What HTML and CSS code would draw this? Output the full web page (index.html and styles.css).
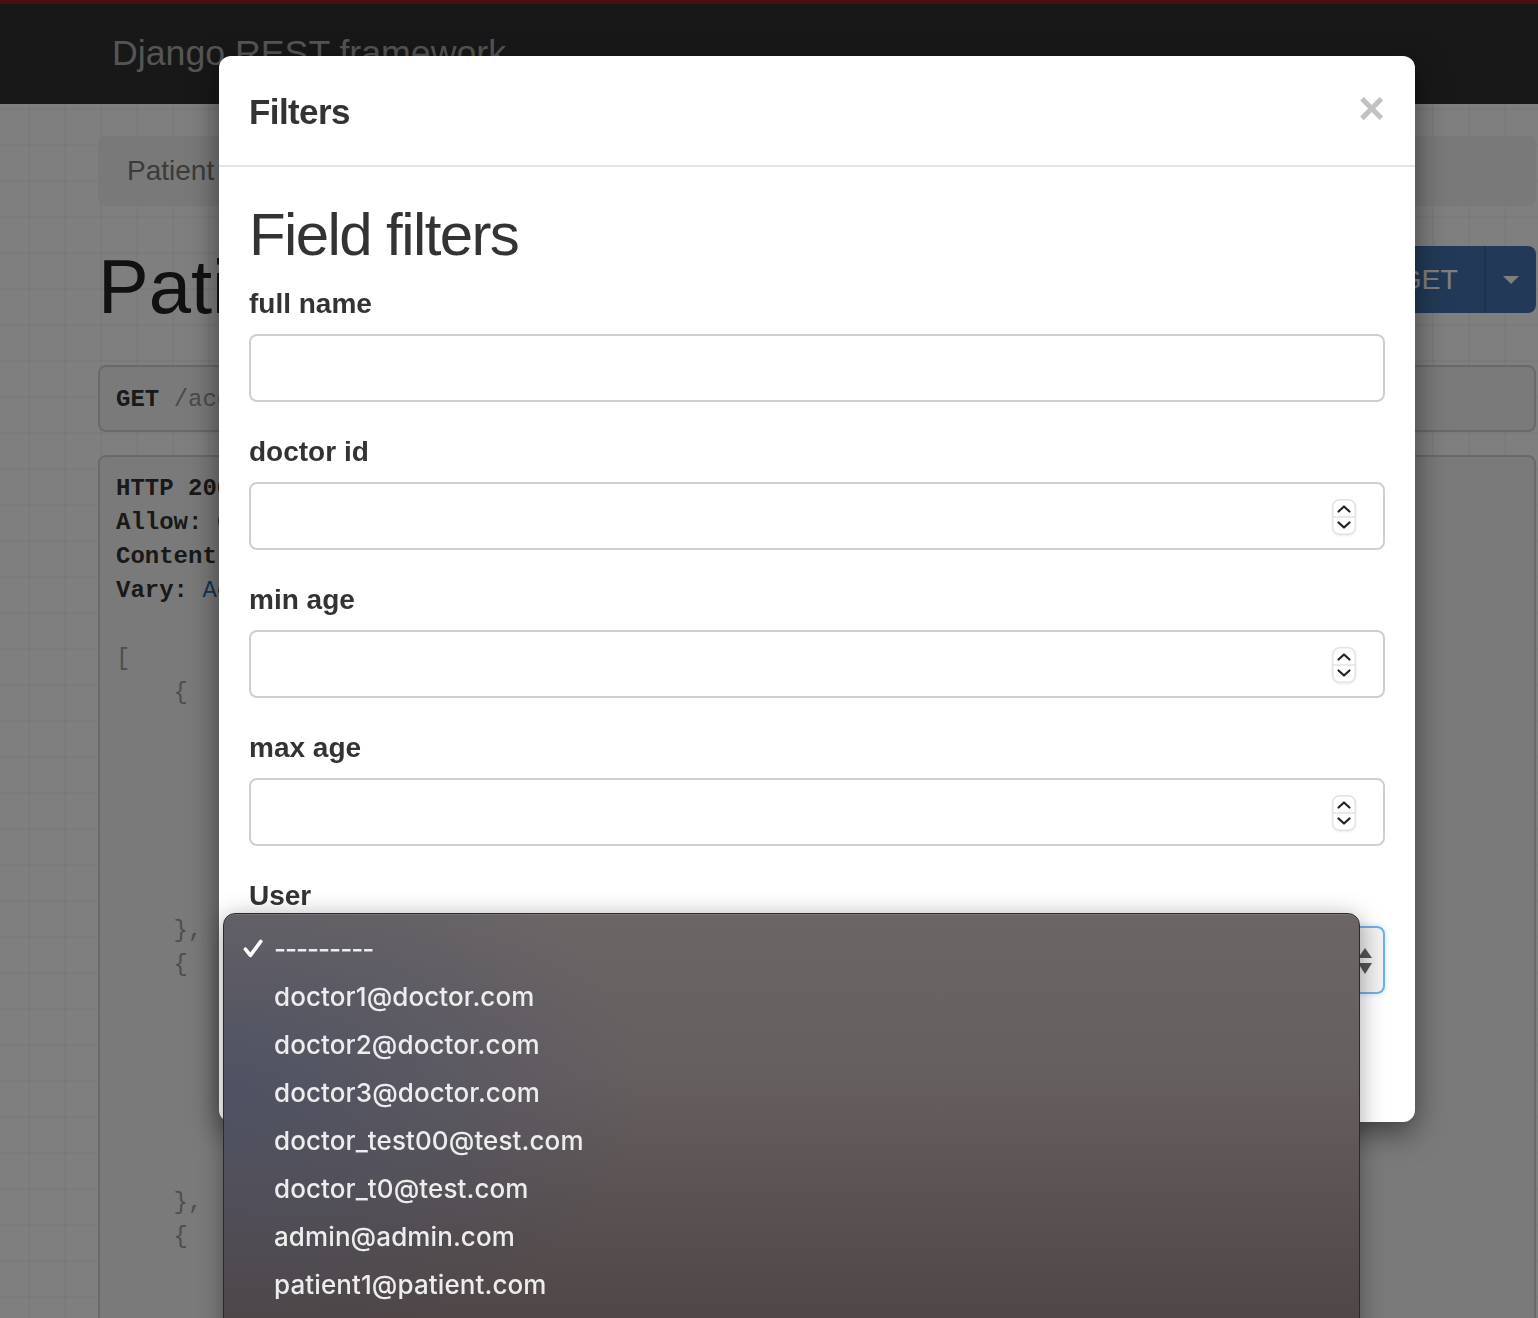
FILE: index.html
```html
<!DOCTYPE html>
<html lang="en">
<head>
<meta charset="utf-8">
<title>Patient List – Django REST framework</title>
<link rel="stylesheet" href="styles.css">
</head>
<body>
<div class="page">
  <header class="navbar"><span class="brand">Django REST framework</span></header>
  <div class="container">
    <div class="breadcrumb">Patient List</div>
    <div class="title-row">
      <h1>Patient List</h1>
      <div class="btn-group">
        <span class="btn-get">GET</span>
        <span class="btn-caret"><span class="caret"></span></span>
      </div>
    </div>
    <pre class="request"><b>GET</b> <span class="url">/accounts/patients/</span></pre>
    <pre class="response"><b>HTTP 200 OK</b>
<b>Allow:</b> <span class="lit">GET, POST, HEAD, OPTIONS</span>
<b>Content-Type:</b> <span class="lit">application/json</span>
<b>Vary:</b> <span class="lit">Accept</span>

<span class="pun">[</span>
    <span class="pun">{</span>
        <span class="str">"id"</span><span class="pun">: </span><span class="lit">1</span><span class="pun">,</span>
        <span class="str">"full_name"</span><span class="pun">: </span><span class="str">"John Smith"</span><span class="pun">,</span>
        <span class="str">"age"</span><span class="pun">: </span><span class="lit">34</span><span class="pun">,</span>
        <span class="str">"doctor"</span><span class="pun">: </span><span class="lit">1</span><span class="pun">,</span>
        <span class="str">"user"</span><span class="pun">: </span><span class="lit">7</span><span class="pun">,</span>
        <span class="str">"created_at"</span><span class="pun">: </span><span class="str">"2020-05-12T10:21:00Z"</span>
    <span class="pun">},</span>
    <span class="pun">{</span>
        <span class="str">"id"</span><span class="pun">: </span><span class="lit">2</span><span class="pun">,</span>
        <span class="str">"full_name"</span><span class="pun">: </span><span class="str">"Mary Jones"</span><span class="pun">,</span>
        <span class="str">"age"</span><span class="pun">: </span><span class="lit">52</span><span class="pun">,</span>
        <span class="str">"doctor"</span><span class="pun">: </span><span class="lit">2</span><span class="pun">,</span>
        <span class="str">"user"</span><span class="pun">: </span><span class="lit">8</span><span class="pun">,</span>
        <span class="str">"created_at"</span><span class="pun">: </span><span class="str">"2020-05-13T09:02:00Z"</span>
    <span class="pun">},</span>
    <span class="pun">{</span>
        <span class="str">"id"</span><span class="pun">: </span><span class="lit">3</span><span class="pun">,</span>
</pre>
  </div>
</div>

<div class="backdrop"></div>

<div class="modal">
  <div class="modal-header">
    <h4 class="modal-title">Filters</h4>
    <span class="close">×</span>
  </div>
  <div class="modal-body">
    <h2>Field filters</h2>
    <div class="form-group">
      <label>full name</label>
      <div class="form-control"></div>
    </div>
    <div class="form-group">
      <label>doctor id</label>
      <div class="form-control">
        <svg class="spinner" width="24" height="36" viewBox="0 0 24 36"><rect x="0.75" y="0.75" width="22.5" height="34.5" rx="7" fill="#fff" stroke="#e3e3e3" stroke-width="1.5"/><line x1="1" y1="18" x2="23" y2="18" stroke="#e3e3e3" stroke-width="1.5"/><path d="M6.5 12.5 L12 7.5 L17.5 12.5" fill="none" stroke="#222" stroke-width="2.2" stroke-linecap="round" stroke-linejoin="round"/><path d="M6.5 23.5 L12 28.5 L17.5 23.5" fill="none" stroke="#222" stroke-width="2.2" stroke-linecap="round" stroke-linejoin="round"/></svg>
      </div>
    </div>
    <div class="form-group">
      <label>min age</label>
      <div class="form-control">
        <svg class="spinner" width="24" height="36" viewBox="0 0 24 36"><rect x="0.75" y="0.75" width="22.5" height="34.5" rx="7" fill="#fff" stroke="#e3e3e3" stroke-width="1.5"/><line x1="1" y1="18" x2="23" y2="18" stroke="#e3e3e3" stroke-width="1.5"/><path d="M6.5 12.5 L12 7.5 L17.5 12.5" fill="none" stroke="#222" stroke-width="2.2" stroke-linecap="round" stroke-linejoin="round"/><path d="M6.5 23.5 L12 28.5 L17.5 23.5" fill="none" stroke="#222" stroke-width="2.2" stroke-linecap="round" stroke-linejoin="round"/></svg>
      </div>
    </div>
    <div class="form-group">
      <label>max age</label>
      <div class="form-control">
        <svg class="spinner" width="24" height="36" viewBox="0 0 24 36"><rect x="0.75" y="0.75" width="22.5" height="34.5" rx="7" fill="#fff" stroke="#e3e3e3" stroke-width="1.5"/><line x1="1" y1="18" x2="23" y2="18" stroke="#e3e3e3" stroke-width="1.5"/><path d="M6.5 12.5 L12 7.5 L17.5 12.5" fill="none" stroke="#222" stroke-width="2.2" stroke-linecap="round" stroke-linejoin="round"/><path d="M6.5 23.5 L12 28.5 L17.5 23.5" fill="none" stroke="#222" stroke-width="2.2" stroke-linecap="round" stroke-linejoin="round"/></svg>
      </div>
    </div>
    <div class="form-group">
      <label>User</label>
      <div class="form-control select">
        <svg class="select-arrows" width="14" height="26" viewBox="0 0 14 26"><path d="M7 0 L14 10 L0 10 Z" fill="#555"/><path d="M0 15 L14 15 L7 26 Z" fill="#555"/></svg>
      </div>
    </div>
  </div>
</div>

<div class="select-menu">
  <div class="option"><svg class="check" width="20" height="19" viewBox="0 0 20 19"><path d="M2.4 10.2 L7.4 16.4 L17.8 2.4" fill="none" stroke="#fff" stroke-width="3.6" stroke-linecap="round" stroke-linejoin="round"/></svg><span class="dashes">---------</span></div>
  <div class="option"><span></span><span>doctor1@doctor.com</span></div>
  <div class="option"><span></span><span>doctor2@doctor.com</span></div>
  <div class="option"><span></span><span>doctor3@doctor.com</span></div>
  <div class="option"><span></span><span>doctor_test00@test.com</span></div>
  <div class="option"><span></span><span>doctor_t0@test.com</span></div>
  <div class="option"><span></span><span>admin@admin.com</span></div>
  <div class="option"><span></span><span>patient1@patient.com</span></div>
  <div class="option"><span></span><span>patient2@patient.com</span></div>
</div>
</body>
</html>
```

FILE: styles.css
```css
* {
  box-sizing: border-box;
}

html,
body {
  margin: 0;
  height: 1318px;
  overflow: hidden;
}

body {
  font-family: "Liberation Sans", Arial, sans-serif;
  color: #333;
  background-color: #fff;
  background-image:
    linear-gradient(to right, rgba(0, 0, 0, 0.035) 2px, transparent 2px),
    linear-gradient(to bottom, rgba(0, 0, 0, 0.035) 2px, transparent 2px);
  background-size: 36px 36px;
  background-position: 28px 0;
}

/* ---------- page behind the modal ---------- */
.navbar {
  height: 104px;
  background: #303030;
  border-top: 4px solid #981e1e;
  padding: 29px 0 0 112px;
}

.brand {
  display: block;
  font-size: 35.7px;
  line-height: 40px;
  color: #aaa;
}

.container {
  padding: 32px 2px 0 98px;
}

.breadcrumb {
  height: 70px;
  background: #f2f2f2;
  border-radius: 8px;
  display: flex;
  align-items: center;
  padding-left: 29px;
  font-size: 28px;
  color: #777;
}

.title-row {
  display: flex;
  justify-content: space-between;
  align-items: flex-start;
  margin-top: 40px;
}

.title-row h1 {
  margin: 0;
  font-size: 76px;
  line-height: 81px;
  font-weight: normal;
  color: #222;
}

.btn-group {
  display: flex;
  height: 67px;
}

.btn-get {
  display: flex;
  align-items: center;
  padding: 0 26px 0 60px;
  background: #4575b1;
  color: #fff;
  font-size: 28.5px;
  border-radius: 8px 0 0 8px;
  border-right: 2px solid #3a6399;
}

.btn-caret {
  width: 50px;
  display: flex;
  align-items: center;
  justify-content: center;
  background: #4575b1;
  border-radius: 0 8px 8px 0;
}

.caret {
  width: 0;
  height: 0;
  border-left: 8px solid transparent;
  border-right: 8px solid transparent;
  border-top: 8px solid #fff;
}

pre {
  margin: 0;
  font-family: "Liberation Mono", "DejaVu Sans Mono", monospace;
  font-size: 24px;
  line-height: 34px;
  color: #333;
}

.request {
  margin-top: 38px;
  background: #f5f5f5;
  border: 2px solid #d2d2d2;
  border-radius: 8px;
  padding: 16px 16px 13px;
}

.request .url {
  color: #959595;
}

.response {
  margin-top: 23px;
  background: #f5f5f5;
  border: 2px solid #d2d2d2;
  border-radius: 8px;
  padding: 15px 16px;
  height: 1000px;
}

.lit {
  color: #2d68a6;
}

.pun {
  color: #93a1a1;
}

.str {
  color: #dd1144;
}

/* ---------- backdrop and modal ---------- */
.backdrop {
  position: fixed;
  inset: 0;
  background: rgba(0, 0, 0, 0.5);
}

.modal {
  position: absolute;
  left: 219px;
  top: 56px;
  width: 1196px;
  height: 1066px;
  background: #fff;
  border-radius: 12px;
  box-shadow: 0 10px 30px rgba(0, 0, 0, 0.5);
}

.modal-header {
  height: 111px;
  border-bottom: 2px solid #e5e5e5;
  display: flex;
  align-items: center;
  justify-content: space-between;
  padding: 2px 30px 0 30px;
}

.modal-title {
  margin: 0;
  font-size: 35px;
  font-weight: bold;
  letter-spacing: -0.6px;
  color: #333;
}

.close {
  font-size: 46px;
  font-weight: bold;
  line-height: 1;
  color: #c2c2c2;
  margin-bottom: 8px;
}

.modal-body {
  padding: 30px;
}

.modal-body h2 {
  margin: 4px 0 16px;
  font-size: 60px;
  line-height: 67px;
  font-weight: normal;
  letter-spacing: -1.6px;
  color: #333;
}

.form-group {
  margin-bottom: 30px;
}

.form-group label {
  display: block;
  font-size: 28px;
  font-weight: bold;
  line-height: 40px;
  margin-bottom: 10px;
  color: #333;
}

.form-control {
  height: 68px;
  border: 2px solid #cfcfcf;
  border-radius: 8px;
  display: flex;
  align-items: center;
  justify-content: flex-end;
  padding-right: 27px;
  background: #fff;
}

.spinner {
  display: block;
  margin-top: 2px;
  filter: drop-shadow(0 1px 1px rgba(0, 0, 0, 0.08));
}

.select {
  border-color: #70aee8;
  background: linear-gradient(to right, #fff 85%, #e2e2e2 96%, #f3f3f3 100%);
  padding-right: 11px;
  box-shadow: 0 0 6px rgba(102, 175, 233, 0.35);
}

.select-arrows {
  display: block;
  margin-top: 2px;
}

/* ---------- native select popup ---------- */
.select-menu {
  position: absolute;
  left: 223px;
  top: 913px;
  width: 1137px;
  height: 460px;
  padding-top: 10px;
  border: 1px solid #2b2929;
  border-radius: 12px;
  background:
    radial-gradient(ellipse 420px 260px at 0% 38%, rgba(60, 72, 102, 0.55), rgba(60, 72, 102, 0) 100%),
    linear-gradient(to bottom, #6b6566 0%, #665f60 35%, #564e4f 70%, #4a4243 100%);
  box-shadow: inset 0 1px 0 rgba(255, 255, 255, 0.12), 0 4px 24px rgba(0, 0, 0, 0.35);
  font-family: Inter, "Liberation Sans", sans-serif;
  font-size: 26px;
  font-weight: 500;
  letter-spacing: 0.1px;
  color: #ededed;
}

.option {
  display: grid;
  grid-template-columns: 31px auto;
  align-items: center;
  height: 48px;
  padding-left: 19px;
}

.check {
  display: block;
}

.dashes {
  letter-spacing: -1px;
}
```
